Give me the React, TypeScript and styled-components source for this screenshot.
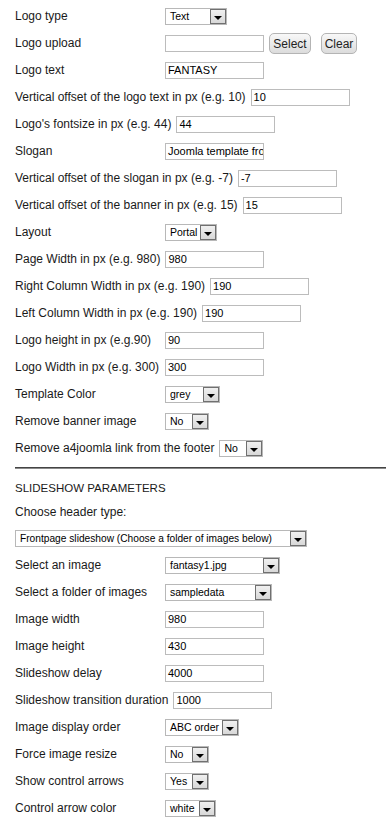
import React from "react";
import styled, { createGlobalStyle } from "styled-components";

const GlobalStyle = createGlobalStyle`
  html, body {
    margin: 0;
    padding: 0;
    background: #fff;
  }
  body {
    font-family: "Liberation Sans", Arial, sans-serif;
    color: #1a1a1a;
  }
`;

const Page = styled.div`
  width: 386px;
  height: 833px;
  overflow: hidden;
  padding: 3px 0 0 15px;
  box-sizing: border-box;
`;

const Row = styled.div<{ h?: number }>`
  display: flex;
  align-items: center;
  height: ${({ h }) => (h ? h + "px" : "27px")};
  white-space: nowrap;
`;

const Label = styled.span`
  display: inline-block;
  min-width: 145px;
  margin-right: 5px;
  font-size: 12px;
  line-height: 14px;
  color: #1a1a1a;
  position: relative;
  top: -1px;
`;

const TextInput = styled.div<{ w?: number }>`
  width: ${({ w }) => (w ? w + "px" : "99px")};
  height: 17px;
  box-sizing: border-box;
  border: 1px solid #bcbcbc;
  padding: 0 2px;
  font-size: 11px;
  line-height: 15px;
  color: #000;
  overflow: hidden;
`;

const SelectBox = styled.div<{ w: number }>`
  width: ${({ w }) => w + "px"};
  height: 17px;
  box-sizing: border-box;
  border: 1px solid #b8b8b8;
  display: flex;
  align-items: stretch;
  background: #fff;
`;

const SelectValue = styled.span<{ fs?: number }>`
  flex: 1;
  padding: 0 1px 0 4px;
  font-size: ${({ fs }) => (fs ? fs + "px" : "10.5px")};
  line-height: 15px;
  color: #000;
  overflow: hidden;
`;

const ArrowBox = styled.span`
  width: 16px;
  flex: none;
  box-sizing: border-box;
  border: 1px solid #707070;
  background: linear-gradient(#f0f0f0, #d8d8d8);
  display: flex;
  align-items: center;
  justify-content: center;

  &::after {
    content: "";
    display: block;
    margin-top: 2px;
    border-left: 4px solid transparent;
    border-right: 4px solid transparent;
    border-top: 4px solid #000;
  }
`;

const Button = styled.span<{ w: number; gap: number }>`
  display: inline-flex;
  align-items: center;
  justify-content: center;
  width: ${({ w }) => w + "px"};
  height: 21px;
  margin-left: ${({ gap }) => gap + "px"};
  box-sizing: border-box;
  border: 1px solid #b4b4b4;
  border-radius: 5px;
  background: linear-gradient(#f8f8f8, #dcdcdc);
  font-size: 12px;
  color: #222;
`;

const Divider = styled.div`
  height: 1px;
  background: #444;
  margin-top: 5px;
  border-bottom: 1px solid #8a8a8a;
`;

const Heading = styled.div`
  display: flex;
  align-items: center;
  height: 26px;
  margin-top: 6px;
  font-size: 11.5px;
  color: #1a1a1a;
`;

const Select: React.FC<{ w: number; value: string; fs?: number }> = ({ w, value, fs }) => (
  <SelectBox w={w}>
    <SelectValue fs={fs}>{value}</SelectValue>
    <ArrowBox />
  </SelectBox>
);

type Field =
  | { label: string; input: string; w?: number }
  | { label: string; select: string; w: number };

const top: Field[] = [{ label: "Logo type", select: "Text", w: 62 }];

const afterUpload: Field[] = [
  { label: "Logo text", input: "FANTASY" },
  { label: "Vertical offset of the logo text in px (e.g. 10)", input: "10" },
  { label: "Logo's fontsize in px (e.g. 44)", input: "44" },
  { label: "Slogan", input: "Joomla template from a4joomla" },
  { label: "Vertical offset of the slogan in px (e.g. -7)", input: "-7" },
  { label: "Vertical offset of the banner in px (e.g. 15)", input: "15" },
  { label: "Layout", select: "Portal", w: 52 },
  { label: "Page Width in px (e.g. 980)", input: "980" },
  { label: "Right Column Width in px (e.g. 190)", input: "190" },
  { label: "Left Column Width in px (e.g. 190)", input: "190" },
  { label: "Logo height in px (e.g.90)", input: "90" },
  { label: "Logo Width in px (e.g. 300)", input: "300" },
  { label: "Template Color", select: "grey", w: 55 },
  { label: "Remove banner image", select: "No", w: 44 },
  { label: "Remove a4joomla link from the footer", select: "No", w: 44 },
];

const slides: Field[] = [
  { label: "Select an image", select: "fantasy1.jpg", w: 115 },
  { label: "Select a folder of images", select: "sampledata", w: 107 },
  { label: "Image width", input: "980" },
  { label: "Image height", input: "430" },
  { label: "Slideshow delay", input: "4000" },
  { label: "Slideshow transition duration", input: "1000" },
  { label: "Image display order", select: "ABC order", w: 74 },
  { label: "Force image resize", select: "No", w: 44 },
  { label: "Show control arrows", select: "Yes", w: 44 },
  { label: "Control arrow color", select: "white", w: 51 },
];

const FieldRow: React.FC<{ f: Field }> = ({ f }) => (
  <Row>
    <Label>{f.label}</Label>
    {"select" in f ? (
      <Select w={f.w} value={f.select} />
    ) : (
      <TextInput w={f.w}>{f.input}</TextInput>
    )}
  </Row>
);

const App: React.FC = () => {
  return (
    <Page>
      <GlobalStyle />
      {top.map((f) => (
        <FieldRow key={f.label} f={f} />
      ))}
      <Row>
        <Label>Logo upload</Label>
        <TextInput />
        <Button w={42} gap={5}>Select</Button>
        <Button w={36} gap={10}>Clear</Button>
      </Row>
      {afterUpload.map((f) => (
        <FieldRow key={f.label} f={f} />
      ))}
      <Divider />
      <Heading>SLIDESHOW PARAMETERS</Heading>
      <Row h={24}>
        <Label>Choose header type:</Label>
      </Row>
      <Row h={27}>
        <Select w={292} fs={10.2} value="Frontpage slideshow (Choose a folder of images below)" />
      </Row>
      {slides.map((f) => (
        <FieldRow key={f.label} f={f} />
      ))}
    </Page>
  );
};

export default App;
